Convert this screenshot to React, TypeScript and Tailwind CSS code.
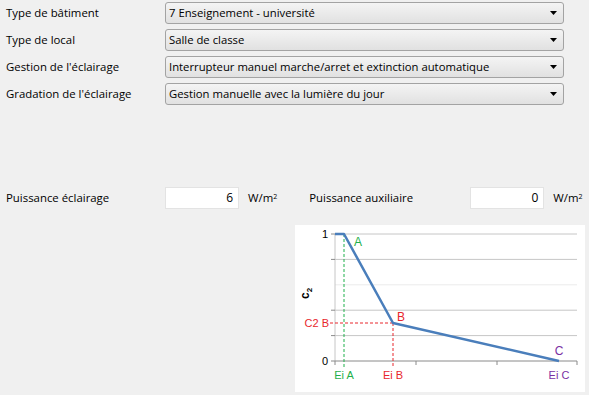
import React from "react";

const FONT = { fontFamily: "'Open Sans', 'Noto Sans', sans-serif" };

type SelectRowProps = { label: string; value: string };

function SelectRow({ label, value }: SelectRowProps) {
  return (
    <div className="flex items-center h-[22px]">
      <div className="w-[159px] text-[11.4px] text-black leading-none">{label}</div>
      <div className="w-[399px] h-[22px] flex items-center justify-between rounded-[3px] border border-[#a3a3a3] bg-gradient-to-b from-[#f4f4f4] to-[#e1e1e1] pl-[3px] pr-[5px]">
        <span className="text-[11.3px] text-black leading-none">{value}</span>
        <svg width="8" height="5" viewBox="0 0 8 5">
          <path d="M0 0 H7 L3.5 4 Z" fill="#000" />
        </svg>
      </div>
    </div>
  );
}

function PowerField({ label, value, labelWidth }: { label: string; value: string; labelWidth: string }) {
  return (
    <div className="flex items-center h-[22px]">
      <div className={`${labelWidth} text-[11.4px] text-black leading-none`}>{label}</div>
      <div className="w-[74px] h-[22px] bg-white border border-[#e3e3e3] flex items-center justify-end pr-[5px] text-[12px] text-black">
        {value}
      </div>
      <span className="ml-[9px] text-[11.4px] text-black leading-none">
        W/m<sup className="text-[7px]">2</sup>
      </span>
    </div>
  );
}

function Chart() {
  const grid = [9, 34.4, 59.8, 85.2, 110.6];
  const ticks = [40, 121, 202, 282];
  const green = "#1fb04a";
  const red = "#e8262c";
  const purple = "#7a2fa3";
  return (
    <svg width="290" height="167" className="bg-white block" style={{ fontFamily: "Arial, 'Liberation Sans', sans-serif" }}>
      {grid.map((y, i) => (
        <line key={y} x1="40" x2="282" y1={y} y2={y} stroke={i === 2 ? "#ececec" : "#c6c6c6"} strokeWidth="1" />
      ))}
      <line x1="40" x2="40" y1="9" y2="136" stroke="#c6c6c6" />
      <line x1="36" x2="282" y1="136" y2="136" stroke="#8a8a8a" />
      {ticks.map((x) => (
        <line key={x} x1={x} x2={x} y1="136" y2="140" stroke="#8a8a8a" />
      ))}
      <line x1="36" x2="40" y1="9" y2="9" stroke="#8a8a8a" />
      <line x1="36" x2="40" y1="34.4" y2="34.4" stroke="#8a8a8a" />
      <line x1="36" x2="40" y1="85.2" y2="85.2" stroke="#8a8a8a" />
      <line x1="36" x2="40" y1="110.6" y2="110.6" stroke="#8a8a8a" />

      <line x1="49" x2="49" y1="9" y2="143" stroke={green} strokeDasharray="3 2" />
      <line x1="35" x2="98" y1="98" y2="98" stroke={red} strokeDasharray="3 2" />
      <line x1="98" x2="98" y1="98" y2="143" stroke={red} strokeDasharray="3 2" />

      <polyline points="40,9 49,9 98,98 264,136" fill="none" stroke="#4a7ebb" strokeWidth="2.5" strokeLinejoin="round" />

      <text x="33" y="13" fontSize="11" textAnchor="end" fill="#000">1</text>
      <text x="33" y="140" fontSize="11" textAnchor="end" fill="#000">0</text>
      <text x="34" y="102" fontSize="11" textAnchor="end" fill={red}>C2 B</text>

      <text x="63" y="21" fontSize="12" textAnchor="middle" fill={green}>A</text>
      <text x="106" y="96" fontSize="12" textAnchor="middle" fill={red}>B</text>
      <text x="264" y="130" fontSize="12" textAnchor="middle" fill={purple}>C</text>

      <text x="49" y="154" fontSize="11" textAnchor="middle" fill={green}>Ei A</text>
      <text x="98" y="154" fontSize="11" textAnchor="middle" fill={red}>Ei B</text>
      <text x="264" y="154" fontSize="11" textAnchor="middle" fill={purple}>Ei C</text>

      <g transform="translate(14 74) rotate(-90)">
        <text x="0" y="0" fontSize="12" fontWeight="bold" fill="#000">
          c<tspan fontSize="8" dy="3">2</tspan>
        </text>
      </g>
    </svg>
  );
}

export default function App() {
  return (
    <div className="w-[589px] h-[395px] bg-[#f0f0f0] overflow-hidden" style={FONT}>
      <div className="flex flex-col gap-[5px] pt-[2px] pl-[6px]">
        <SelectRow label="Type de bâtiment" value="7 Enseignement - université" />
        <SelectRow label="Type de local" value="Salle de classe" />
        <SelectRow label="Gestion de l'éclairage" value="Interrupteur manuel marche/arret et extinction automatique" />
        <SelectRow label="Gradation de l'éclairage" value="Gestion manuelle avec la lumière du jour" />
      </div>

      <div className="flex items-center mt-[82px] pl-[6px]">
        <PowerField label="Puissance éclairage" value="6" labelWidth="w-[159px]" />
        <div className="ml-[32px]">
          <PowerField label="Puissance auxiliaire" value="0" labelWidth="w-[161px]" />
        </div>
      </div>

      <div className="mt-[16px] ml-[295px]">
        <Chart />
      </div>
    </div>
  );
}
